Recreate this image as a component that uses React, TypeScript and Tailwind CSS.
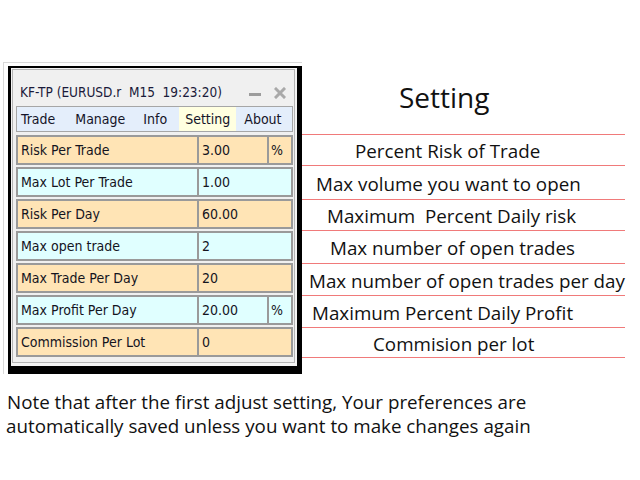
import React from 'react';

type Row = {
  label: string;
  value: string;
  pct?: boolean;
  tone: 'orange' | 'cyan';
};

const rows: Row[] = [
  { label: 'Risk Per Trade', value: '3.00', pct: true, tone: 'orange' },
  { label: 'Max Lot Per Trade', value: '1.00', tone: 'cyan' },
  { label: 'Risk Per Day', value: '60.00', tone: 'orange' },
  { label: 'Max open trade', value: '2', tone: 'cyan' },
  { label: 'Max Trade Per Day', value: '20', tone: 'orange' },
  { label: 'Max Profit Per Day', value: '20.00', pct: true, tone: 'cyan' },
  { label: 'Commission Per Lot', value: '0', tone: 'orange' },
];

// right-hand notes, each with its own row height and text offset
const notes = [
  { text: 'Percent Risk of Trade', h: 'h-[31px]', pl: 'pl-[53px]' },
  { text: 'Max volume you want to open', h: 'h-[34px]', pl: 'pl-[14px]' },
  { text: 'Maximum\u00a0 Percent Daily risk', h: 'h-[31px]', pl: 'pl-[25px]' },
  { text: 'Max number of open trades', h: 'h-[33px]', pl: 'pl-[28px]' },
  { text: 'Max number of open trades per day', h: 'h-[32px]', pl: 'pl-[7px]' },
  { text: 'Maximum Percent Daily Profit', h: 'h-[32px]', pl: 'pl-[10px]' },
  { text: 'Commision per lot', h: 'h-[31px]', pl: 'pl-[71px]' },
];

const tabs = [
  { name: 'Trade', cls: 'pl-[4px] pr-[20px]' },
  { name: 'Manage', cls: 'pr-[18px]' },
  { name: 'Info', cls: 'pr-[12px]' },
  { name: 'Setting', cls: 'bg-[#ffffe0] px-[6px]' },
  { name: 'About', cls: 'pl-[8px]' },
];

const mt4Font = { fontFamily: '"DejaVu Sans Condensed", "DejaVu Sans", sans-serif', fontStretch: 'condensed' as const };

const CloseIcon = () => (
  <svg width="12" height="12" viewBox="0 0 12 12">
    <path d="M2 2 L10 10 M10 2 L2 10" stroke="#a9a9a9" strokeWidth="3" strokeLinecap="square" />
  </svg>
);

const SettingsWindow = () => (
  <div className="ml-[3px] w-[299px] border-l border-t border-[#d9d9d9] pl-[4px] pt-[3px]">
    <div className="border-l-[3px] border-t-2 border-r-[5px] border-b-[8px] border-black bg-[#f4f4f4]">
      <div className="m-[1px] mr-[2px] mb-[3px] border border-[#b4b4b4] bg-[#f0f0f0] pl-[3px] pr-[1px] pb-[5px]" style={mt4Font}>
        <div className="flex h-[36px] items-center pl-[4px] pr-[7px] pt-[9px] text-[13.5px] text-[#1a1a3a]">
          <span className="whitespace-pre">KF-TP (EURUSD.r  M15  19:23:20)</span>
          <span className="ml-auto mt-[4px] h-[3px] w-[12px] bg-[#9c9c9c]" />
          <span className="ml-[13px] flex items-center">
            <CloseIcon />
          </span>
        </div>
        <div className="flex h-[26px] items-stretch border border-[#a6a6a6] bg-[#e4eefb] text-[14px] text-[#141428]">
          {tabs.map((t) => (
            <div key={t.name} className={`flex items-center ${t.cls}`}>
              {t.name}
            </div>
          ))}
        </div>
        <div className="mt-[3px] flex flex-col gap-[2px] text-[14px] text-[#14141e]">
          {rows.map((r) => {
            const bg = r.tone === 'orange' ? 'bg-[#ffe4b5]' : 'bg-[#e0ffff]';
            return (
              <div key={r.label} className="flex h-[30px]">
                <div className={`flex w-[181px] items-center border-y-2 border-l-2 border-[#9a9a9a] pl-[3px] ${bg}`}>
                  {r.label}
                </div>
                <div className={`flex flex-1 items-center border-y-2 border-l-2 border-[#9a9a9a] pl-[3px] ${r.pct ? '' : 'border-r-2'} ${bg}`}>
                  {r.value}
                </div>
                {r.pct && (
                  <div className={`flex w-[26px] items-center border-2 border-[#9a9a9a] pl-[2px] ${bg}`}>%</div>
                )}
              </div>
            );
          })}
        </div>
      </div>
    </div>
  </div>
);

export default function App() {
  return (
    <div className="h-[480px] w-[640px] overflow-hidden bg-white text-black" style={{ fontFamily: '"Open Sans", sans-serif' }}>
      <div className="h-[62px]" />
      <div className="flex">
        <SettingsWindow />
        <div className="w-[323px]">
          <div className="flex h-[72px] items-center pb-[3px] pl-[97px] text-[28px] text-[#111]">Setting</div>
          {notes.map((n, i) => (
            <div
              key={n.text}
              className={`flex items-center whitespace-pre border-t border-[#f07a7a] pt-[3px] text-[18.8px] text-[#111] ${n.h} ${n.pl} ${
                i === notes.length - 1 ? 'border-b' : ''
              }`}
            >
              {n.text}
            </div>
          ))}
        </div>
      </div>
      <div className="mt-[17px] pl-[7px] text-[18.8px] leading-[23px] text-[#111]">
        <p>Note that after the first adjust setting, Your preferences are</p>
        <p className="-ml-[1px] mt-[1px]">automatically saved unless you want to make changes again</p>
      </div>
    </div>
  );
}
